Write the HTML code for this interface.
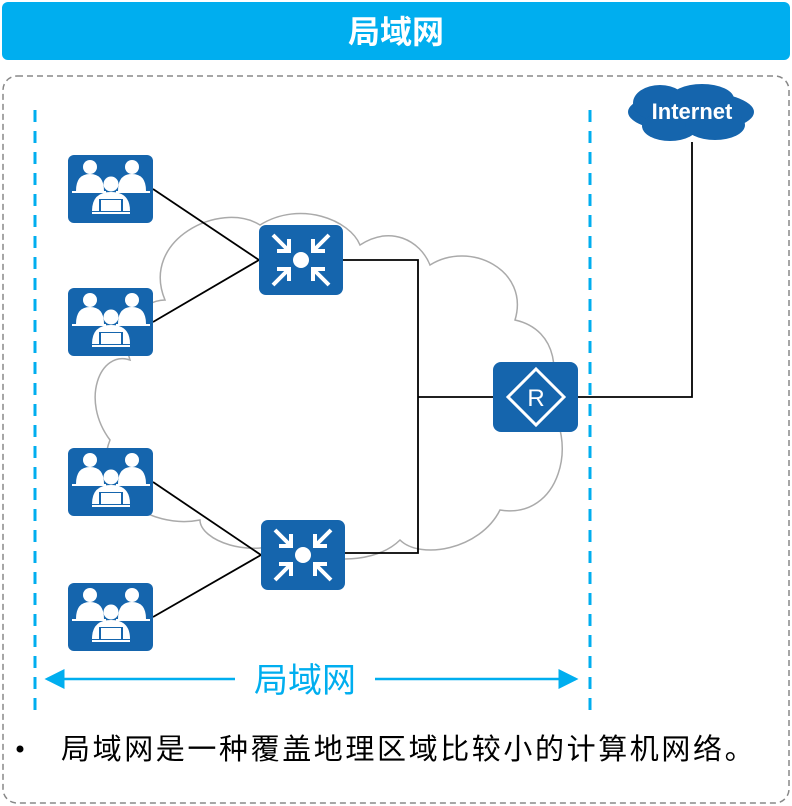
<!DOCTYPE html>
<html><head><meta charset="utf-8"><style>
html,body{margin:0;padding:0;background:#fff;width:792px;height:806px;overflow:hidden}
</style></head><body>
<svg width="792" height="806" viewBox="0 0 792 806" xmlns="http://www.w3.org/2000/svg" style="position:absolute;left:0;top:0">
<defs>
<g id="users">
<rect x="0" y="0" width="85" height="68" rx="6" fill="#1565ad"/>
<g fill="#fff">
<circle cx="22" cy="12" r="7"/><path d="M8 36 Q8 19 22 19 Q36 19 36 36 Z"/>
<circle cx="64" cy="12" r="7"/><path d="M50 36 Q50 19 64 19 Q78 19 78 36 Z"/>
<rect x="4" y="36" width="34" height="2"/><rect x="48" y="36" width="34" height="2"/>
<circle cx="43" cy="29" r="7.5"/><path d="M24 56 Q24 37 43 37 Q62 37 62 56 Z"/>
<rect x="24" y="57" width="38" height="2"/>
</g>
<rect x="31" y="44" width="24" height="13" fill="#1565ad"/>
<rect x="33" y="45" width="20" height="11" fill="#fff"/>
</g>
<g id="sw">
<rect x="0" y="0" width="84" height="70" rx="7" fill="#1565ad"/>
<circle cx="42" cy="35" r="8" fill="#fff"/>
<g stroke="#fff" stroke-width="4" fill="none">
<path d="M14 10 L30 26 M30 14 V26 H18"/>
<path d="M70 10 L54 26 M54 14 V26 H66"/>
<path d="M14 60 L30 44 M30 56 V44 H18"/>
<path d="M70 60 L54 44 M54 56 V44 H66"/>
</g>
</g>
<marker id="ar" markerWidth="8" markerHeight="8" refX="7" refY="4" orient="auto-start-reverse"><path d="M0 0 L8 4 L0 8 Z" fill="#00aeef"/></marker>
</defs>
<rect x="2" y="2" width="788" height="58" rx="6" fill="#00aeef"/>
<text x="396" y="43" text-anchor="middle" font-family="Liberation Sans, Noto Sans CJK SC, sans-serif" font-size="32" font-weight="bold" fill="#fff">局域网</text>
<rect x="3" y="76" width="786" height="727" rx="14" fill="none" stroke="#888" stroke-width="1.5" stroke-dasharray="6 4"/>
<g stroke="#00aeef" stroke-width="3" stroke-dasharray="12 9">
<line x1="35" y1="110" x2="35" y2="715"/><line x1="590" y1="110" x2="590" y2="718"/>
</g>
<g fill="#fff" stroke="#aaa" stroke-width="1.5">
<path d="M165 300 C140 240 220 200 260 225 C300 200 350 220 360 245 C390 225 420 240 430 265 C470 240 530 270 515 320 C560 330 560 380 545 400 C580 440 560 520 500 510 C480 550 420 560 400 540 C370 570 300 560 290 540 C250 560 200 540 200 520 C150 530 90 490 110 440 C80 400 100 350 130 360 C120 330 140 300 165 300 Z"/>
</g>
<g stroke="#000" stroke-width="1.8" fill="none">
<path d="M153 189 L259 260 M153 322 L259 260"/>
<path d="M153 482 L261 555 M153 617 L261 555"/>
<path d="M343 260 H418 V553 H345 M418 397 H493"/>
<path d="M578 397 H692 V142"/>
</g>
<use href="#users" x="68" y="155"/>
<use href="#users" x="68" y="288"/>
<use href="#users" x="68" y="448"/>
<use href="#users" x="68" y="583"/>
<use href="#sw" x="259" y="225"/>
<use href="#sw" x="261" y="520"/>
<rect x="493" y="362" width="85" height="70" rx="8" fill="#1565ad"/>
<path d="M536 369 L564 397 L536 425 L508 397 Z" fill="none" stroke="#fff" stroke-width="3"/>
<text x="536" y="406" text-anchor="middle" font-family="Liberation Sans, sans-serif" font-size="24" fill="#fff">R</text>
<g fill="#1565ad">
<ellipse cx="691" cy="112" rx="63" ry="21"/>
<ellipse cx="660" cy="103" rx="27" ry="18"/><ellipse cx="702" cy="99" rx="32" ry="15"/>
<ellipse cx="670" cy="126" rx="28" ry="15"/><ellipse cx="715" cy="125" rx="30" ry="15"/>
</g>
<text x="692" y="119" text-anchor="middle" font-family="Liberation Sans, sans-serif" font-size="22" font-weight="bold" fill="#fff">Internet</text>
<g stroke="#00aeef" stroke-width="2.5">
<line x1="47" y1="679" x2="235" y2="679" marker-start="url(#ar)"/>
<line x1="375" y1="679" x2="576" y2="679" marker-end="url(#ar)"/>
</g>
<text x="305" y="692" text-anchor="middle" font-family="Liberation Sans, Noto Sans CJK SC, sans-serif" font-size="34" fill="#00aeef">局域网</text>
<circle cx="20" cy="749" r="3.5" fill="#000"/>
<text x="61" y="759" font-family="Liberation Sans, Noto Sans CJK SC, sans-serif" font-size="29" fill="#000" letter-spacing="2.6">局域网是一种覆盖地理区域比较小的计算机网络。</text>
</svg>
</body></html>
